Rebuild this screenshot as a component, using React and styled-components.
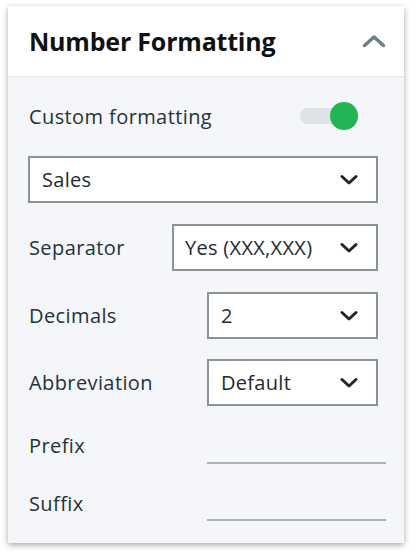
import React from 'react'
import styled, { createGlobalStyle } from 'styled-components'

const Global = createGlobalStyle`
  body {
    margin: 0;
    background: #ffffff;
    font-family: "Open Sans", "Noto Sans", sans-serif;
  }
`

const Page = styled.div`
  padding: 6px 12px 15px 8px;
`

const Card = styled.section`
  width: 396px;
  background: #f4f6f9;
  box-shadow: 0 2px 6px rgba(0, 0, 0, 0.35);
`

const Header = styled.header`
  height: 71px;
  box-sizing: border-box;
  display: flex;
  align-items: center;
  justify-content: space-between;
  padding: 0 18px 0 21px;
  background: #ffffff;
  border-bottom: 1px solid #e3e7ec;
`

const Title = styled.h2`
  margin: 0;
  font-size: 25px;
  font-weight: 700;
  color: #111111;
  letter-spacing: -0.2px;
`

const Body = styled.div`
  display: flex;
  flex-direction: column;
  padding: 25px 18px 22px 20px;
`

const Row = styled.div`
  display: flex;
  align-items: center;
  justify-content: space-between;
  height: ${p => p.$h || 47}px;
  margin-top: ${p => p.$gap || 0}px;
  padding-right: ${p => p.$inset || 0}px;
`

const Label = styled.span`
  font-size: 20px;
  letter-spacing: 0.4px;
  color: #263238;
  padding-left: 1px;
`

const Toggle = styled.div`
  position: relative;
  width: 58px;
  height: 28px;

  &::before {
    content: '';
    position: absolute;
    left: 0;
    top: 6px;
    width: 50px;
    height: 16px;
    border-radius: 8px;
    background: #dde3e7;
  }

  &::after {
    content: '';
    position: absolute;
    right: 0;
    top: 0;
    width: 28px;
    height: 28px;
    border-radius: 50%;
    background: #22b455;
  }
`

const Select = styled.div`
  width: ${p => p.$w ? `${p.$w}px` : '100%'};
  height: 47px;
  box-sizing: border-box;
  display: flex;
  align-items: center;
  justify-content: space-between;
  padding: 0 18px 0 ${p => p.$pl || 12}px;
  background: #ffffff;
  border: 2px solid #8b9298;
  font-size: 20px;
  letter-spacing: 0.3px;
  color: #1f2a30;
`

const Underline = styled.div`
  width: 179px;
  height: 100%;
  box-sizing: border-box;
  border-bottom: 2px solid #aab4bb;
`

function ChevronDown() {
  return (
    <svg width="18" height="12" viewBox="0 0 18 12">
      <path d="M2 2.5 L9 9 L16 2.5" fill="none" stroke="#1e272c" strokeWidth="3" strokeLinecap="round" strokeLinejoin="round" />
    </svg>
  )
}

function ChevronUp() {
  return (
    <svg width="24" height="14" viewBox="0 0 24 14">
      <path d="M2.5 11.5 L12 3 L21.5 11.5" fill="none" stroke="#6a818d" strokeWidth="3.5" strokeLinecap="round" strokeLinejoin="round" />
    </svg>
  )
}

export default function App() {
  return (<>
    <Global />
    <Page>
      <Card>
        <Header>
          <Title>Number Formatting</Title>
          <ChevronUp />
        </Header>
        <Body>
          <Row $h={28} $inset={28}>
            <Label>Custom formatting</Label>
            <Toggle />
          </Row>
          <Row $gap={26} $inset={8}>
            <Select $pl={12}>Sales<ChevronDown /></Select>
          </Row>
          <Row $gap={21} $inset={8}>
            <Label>Separator</Label>
            <Select $w={206} $pl={11}>Yes (XXX,XXX)<ChevronDown /></Select>
          </Row>
          <Row $gap={21} $inset={8}>
            <Label>Decimals</Label>
            <Select $w={171}>2<ChevronDown /></Select>
          </Row>
          <Row $gap={20} $inset={8}>
            <Label>Abbreviation</Label>
            <Select $w={171}>Default<ChevronDown /></Select>
          </Row>
          <Row $gap={21} $h={37}>
            <Label>Prefix</Label>
            <Underline />
          </Row>
          <Row $gap={21} $h={36}>
            <Label>Suffix</Label>
            <Underline />
          </Row>
        </Body>
      </Card>
    </Page>
  </>)
}
